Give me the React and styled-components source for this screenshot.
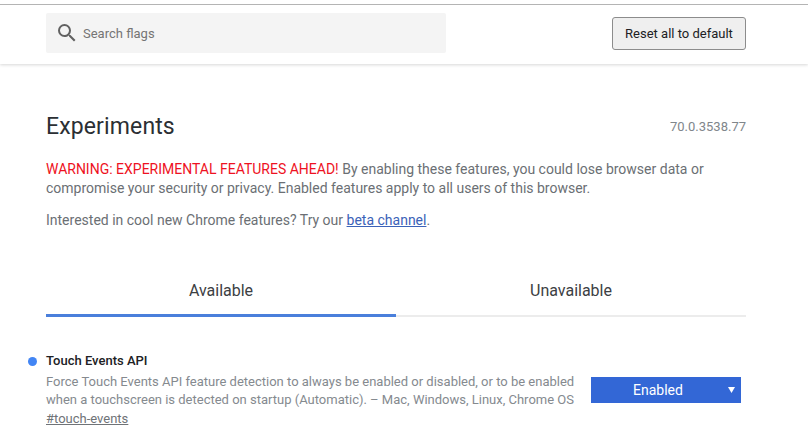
import React from 'react'
import styled, { createGlobalStyle } from 'styled-components'

const Global = createGlobalStyle`
  html, body { margin: 0; padding: 0; background: #fff; }
  body { font-family: Roboto, "Liberation Sans", sans-serif; width: 808px; height: 430px; overflow: hidden; }
`

const Page = styled.div`
  width: 808px;
  height: 430px;
  overflow: hidden;
  border-top: 1px solid #b4b4b4;
  margin-top: 4px;
`

const Header = styled.header`
  display: flex;
  align-items: center;
  justify-content: space-between;
  box-sizing: border-box;
  height: 59px;
  padding: 7px 62px 10px 46px;
  box-shadow: 0 1px 3px rgba(0, 0, 0, 0.16);
`

const SearchBox = styled.div`
  display: flex;
  align-items: center;
  gap: 4px;
  width: 400px;
  height: 40px;
  box-sizing: border-box;
  padding-left: 9px;
  background: #f4f4f4;
  border-radius: 2px;
`

const SearchText = styled.span`
  font-size: 13px;
  color: #757575;
`

const ResetButton = styled.button`
  width: 134px;
  height: 33px;
  padding: 0;
  background: #efefef;
  border: 1px solid #8c8c8c;
  border-radius: 3px;
  font-family: inherit;
  font-size: 13px;
  color: #202124;
`

const Content = styled.main`
  padding: 47px 62px 0 46px;
`

const TitleRow = styled.div`
  display: flex;
  align-items: center;
  justify-content: space-between;
  height: 30px;
`

const Title = styled.h1`
  margin: 0;
  font-size: 23px;
  font-weight: 400;
  letter-spacing: 0.13px;
  color: #2b2f33;
`

const Version = styled.span`
  font-size: 13px;
  color: #80868b;
`

const Paragraph = styled.p`
  margin: ${p => p.$top}px 0 0;
  font-size: 14px;
  line-height: 19px;
  color: #6b6f74;
  width: 700px;
`

const Warning = styled.span`
  color: #ee1122;
`

const BlueLink = styled.a`
  color: #3b62b8;
  text-decoration: underline;
`

const Tabs = styled.div`
  display: flex;
  margin-top: 42px;
  border-bottom: 2px solid #ececec;
`

const Tab = styled.div`
  flex: 1;
  height: 42px;
  margin-bottom: -2px;
  text-align: center;
  font-size: 16px;
  line-height: 38px;
  color: #3c4043;
  border-bottom: ${p => (p.$active ? '3px solid #4a7fdb' : 'none')};
`

const Experiment = styled.section`
  position: relative;
  display: flex;
  justify-content: space-between;
  margin-top: 36px;
`

const Dot = styled.span`
  position: absolute;
  left: -18px;
  top: 4px;
  width: 9px;
  height: 9px;
  border-radius: 50%;
  background: #4285f4;
`

const Details = styled.div`
  width: 535px;
`

const ExperimentName = styled.h2`
  margin: 0;
  font-size: 13px;
  font-weight: 500;
  line-height: 16px;
  color: #202124;
`

const Description = styled.p`
  margin: 4px 0 0;
  font-size: 13px;
  line-height: 18px;
  color: #858a8f;
  white-space: nowrap;
`

const Permalink = styled.a`
  display: block;
  font-size: 13px;
  line-height: 20px;
  color: #6f7377;
  text-decoration: underline;
`

const SelectBox = styled.div`
  position: relative;
  align-self: flex-start;
  width: 150px;
  height: 26px;
  margin: 24px 5px 0 0;
  padding-right: 16px;
  box-sizing: border-box;
  background: #3367d6;
  color: #fff;
  font-size: 14px;
  line-height: 26px;
  text-align: center;
`

const Caret = styled.svg`
  position: absolute;
  right: 6px;
  top: 10px;
  width: 7px;
  height: 6px;
`

const SearchIcon = () => (
  <svg width="24" height="24" viewBox="0 0 24 24" fill="#616161">
    <path d="M15.5 14h-.79l-.28-.27A6.47 6.47 0 0 0 16 9.5 6.5 6.5 0 1 0 9.5 16c1.61 0 3.09-.59 4.23-1.57l.27.28v.79l5 4.99L20.49 19l-4.99-5zm-6 0C7.01 14 5 11.99 5 9.5S7.01 5 9.5 5 14 7.01 14 9.5 11.99 14 9.5 14z" />
  </svg>
)

export default function App() {
  return (
    <Page>
      <Global />
      <Header>
        <SearchBox>
          <SearchIcon />
          <SearchText>Search flags</SearchText>
        </SearchBox>
        <ResetButton>Reset all to default</ResetButton>
      </Header>
      <Content>
        <TitleRow>
          <Title>Experiments</Title>
          <Version>70.0.3538.77</Version>
        </TitleRow>
        <Paragraph $top={19}>
          <Warning>WARNING: EXPERIMENTAL FEATURES AHEAD!</Warning> By enabling these features, you could lose browser data or compromise your security or privacy. Enabled features apply to all users of this browser.
        </Paragraph>
        <Paragraph $top={13}>
          Interested in cool new Chrome features? Try our <BlueLink href="#">beta channel</BlueLink>.
        </Paragraph>
        <Tabs>
          <Tab $active>Available</Tab>
          <Tab>Unavailable</Tab>
        </Tabs>
        <Experiment>
          <Dot />
          <Details>
            <ExperimentName>Touch Events API</ExperimentName>
            <Description>
              Force Touch Events API feature detection to always be enabled or disabled, or to be enabled
              <br />
              when a touchscreen is detected on startup (Automatic). – Mac, Windows, Linux, Chrome OS
            </Description>
            <Permalink href="#">#touch-events</Permalink>
          </Details>
          <SelectBox>
            Enabled
            <Caret viewBox="0 0 7 6">
              <path d="M0 0h7L3.5 6z" fill="#fff" />
            </Caret>
          </SelectBox>
        </Experiment>
      </Content>
    </Page>
  )
}
